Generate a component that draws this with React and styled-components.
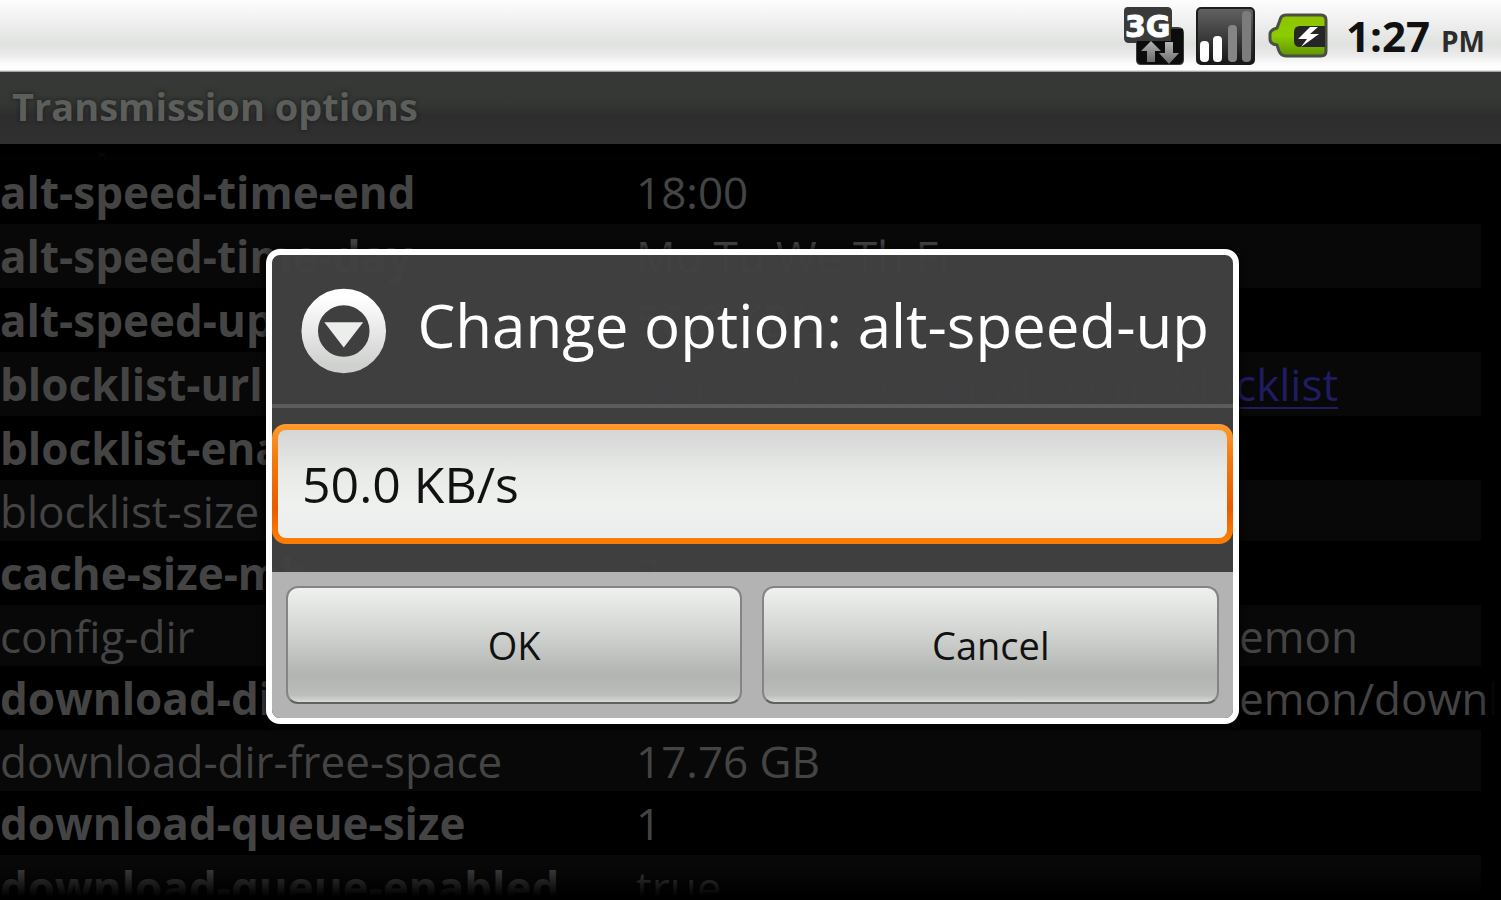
import React from "react";
import styled, { createGlobalStyle } from "styled-components";

const GlobalStyle = createGlobalStyle`
  * { box-sizing: border-box; }
  html, body, #root { height: 100%; }
  body {
    margin: 0;
    background: #000;
    font-family: "Open Sans", "Noto Sans", sans-serif;
    overflow: hidden;
  }
`;

const Screen = styled.div`
  display: flex;
  flex-direction: column;
  height: 100%;
  overflow: hidden;
`;

const StatusBar = styled.header`
  flex: none;
  display: flex;
  align-items: center;
  justify-content: flex-end;
  gap: 12px;
  height: 72px;
  padding: 0 16px 0 0;
  background: linear-gradient(#fdfdfd 0, #f1f2f1 18px, #e0e2e0 44px, #e8e9e8 54px, #fff 66px, #fff 70px, #8a8a8a 72px);
`;

const Clock = styled.time`
  margin-left: 2px;
  padding-top: 4px;
  color: #111;
  font-size: 42px;
  font-weight: 700;
  line-height: 68px;
  white-space: nowrap;
`;

const Meridiem = styled.span`
  color: #2c2c2c;
  font-size: 28px;
`;

const Stage = styled.main`
  position: relative;
  flex: 1;
  display: flex;
  flex-direction: column;
  min-height: 0;
`;

const TitleBar = styled.h1`
  flex: none;
  height: 72px;
  margin: 0;
  padding: 0 12px;
  background: linear-gradient(#383838, #333733 45%, #2d2d2d 60%, #303030);
  color: #5c5e5c;
  font-size: 38px;
  font-weight: 700;
  line-height: 68px;
  text-shadow: 0 0 4px #1c1c1c;
`;

const ListViewport = styled.section`
  position: relative;
  flex: 1;
  min-height: 0;
  overflow: hidden;
`;

const OptionTable = styled.table`
  table-layout: fixed;
  width: calc(100% - 20px);
  margin-top: -48px;
  border-collapse: collapse;
`;

const OptionRow = styled.tr`
  height: ${(p) => (p.$editable ? 64 : 61)}px;
  background: ${(p) => (p.$striped ? "#080808" : "#000")};
`;

const OptionName = styled.th`
  width: 636px;
  padding: 0;
  color: #444;
  font-size: 44px;
  font-weight: ${(p) => (p.$editable ? 700 : 400)};
  line-height: 60px;
  text-align: left;
  white-space: nowrap;
`;

const OptionValue = styled.td`
  padding: 0;
  color: #444;
  font-size: 44px;
  line-height: 60px;
  white-space: nowrap;
`;

const ValueLink = styled.a`
  color: #1f1c60;
  text-decoration: underline;
  text-decoration-thickness: 2px;
  text-underline-offset: 6px;
`;

const EdgeFade = styled.div`
  position: absolute;
  pointer-events: none;
  ${(p) => p.$edge === "top" && "inset: 0 0 auto 0; height: 16px; background: linear-gradient(#000 50%, rgba(0, 0, 0, 0.7));"}
  ${(p) => p.$edge === "right" && "inset: 0 0 0 auto; width: 20px; background: linear-gradient(90deg, transparent, #000 70%);"}
  ${(p) => p.$edge === "bottom" && "inset: auto 0 0 0; height: 36px; background: linear-gradient(transparent, #000 90%);"}
`;

const Overlay = styled.div`
  position: absolute;
  inset: 0;
  display: flex;
  align-items: center;
  justify-content: center;
  padding-left: 4px;
`;

const Dialog = styled.form`
  flex: none;
  width: 65%;
  border: 6px solid #fff;
  border-radius: 14px;
  background: rgba(65, 65, 65, 0.97);
  box-shadow: 0 0 8px #000;
`;

const DialogHeader = styled.div`
  display: flex;
  align-items: center;
  gap: 30px;
  height: 153px;
  padding: 0 24px 0 28px;
  border-bottom: 4px solid #5c5c5c;
`;

const DialogTitle = styled.label`
  padding-bottom: 8px;
  color: #fff;
  font-size: 60px;
  line-height: 80px;
  white-space: nowrap;
`;

const DialogBody = styled.div`
  padding: 16px 0 28px;
`;

const FieldFrame = styled.div`
  padding: 6px;
  border-radius: 14px;
  background: linear-gradient(#ff9a2e, #f07a10 30%, #e65c00 70%, #fb7d04 96%);
`;

const Field = styled.input`
  display: block;
  width: 100%;
  height: 108px;
  padding: 0 24px;
  border: 0;
  border-radius: 8px;
  outline: 0;
  background: linear-gradient(#d4d5d4, #e8eae8 38%, #eff1ef 70%, #eceeee);
  color: #111;
  font-family: inherit;
  font-size: 50px;
`;

const ButtonBar = styled.div`
  display: grid;
  grid-template-columns: 1fr 1fr;
  gap: 20px;
  padding: 14px;
  border-radius: 0 0 8px 8px;
  background: #b3b3b3;
`;

const DialogButton = styled.button`
  height: 118px;
  padding: 0;
  border: 2px solid #838583;
  border-bottom-color: #606260;
  border-radius: 12px;
  background: linear-gradient(#eff1ef, #d3d5d3 38%, #b2b4b2 76%, #bcbebc 94%, #d8dad8);
  color: #111;
  font-family: inherit;
  font-size: 38px;
  line-height: 60px;
`;

const options = [
  { name: "alt-speed-time-enabled", value: "false", editable: true },
  { name: "alt-speed-time-end", value: "18:00", editable: true },
  { name: "alt-speed-time-day", value: "Mo Tu We Th Fr", editable: true },
  { name: "alt-speed-up", value: "50.0 KB/s", editable: true },
  { name: "blocklist-url", value: "http://www.example.com/blocklist", editable: true, link: true },
  { name: "blocklist-enabled", value: "false", editable: true },
  { name: "blocklist-size", value: "0", editable: false },
  { name: "cache-size-mb", value: "2", editable: true },
  { name: "config-dir", value: "/home/.local/transmission-daemon", editable: false },
  { name: "download-dir", value: "/home/.local/transmission-daemon/downloads", editable: true },
  { name: "download-dir-free-space", value: "17.76 GB", editable: false },
  { name: "download-queue-size", value: "1", editable: true },
  { name: "download-queue-enabled", value: "true", editable: true },
];

function NetworkIcon() {
  return (
    <svg width="62" height="62" viewBox="2 1 62 62" role="img" aria-label="3G data">
      <defs>
        <linearGradient id="arrow" x1="0" y1="0" x2="0" y2="1">
          <stop offset="0" stopColor="#b5b5b5" />
          <stop offset="1" stopColor="#6b6b6b" />
        </linearGradient>
      </defs>
      <path d="M8 3H47Q52 3 52 8V23H58Q64 23 64 29V56Q64 61 59 61H21Q16 61 16 56V39H9Q4 39 4 34V7Q4 3 8 3Z" fill="#3a3a3a" />
      <path d="M17 37H51V25H63V55Q63 60 58 60H22Q17 60 17 55Z" fill="#0c0c0c" />
      <text x="5" y="33" fill="#fff" stroke="#fff" strokeWidth="1" fontFamily="DejaVu Sans, sans-serif" fontWeight="700" fontSize="30">3G</text>
      <path d="M31 37L41 47H35V58H27V47H21Z" fill="url(#arrow)" />
      <path d="M49 60L39 49H45V38H53V49H59Z" fill="url(#arrow)" />
    </svg>
  );
}

function SignalIcon() {
  return (
    <svg width="60" height="62" viewBox="2 1 60 62" role="img" aria-label="Signal strength">
      <defs>
        <linearGradient id="signal" x1="0" y1="0" x2="0" y2="1">
          <stop offset="0" stopColor="#636363" />
          <stop offset="1" stopColor="#161616" />
        </linearGradient>
      </defs>
      <rect x="3" y="4" width="57" height="56" rx="4" fill="url(#signal)" stroke="#1c1c1c" strokeWidth="2" />
      <rect x="6" y="37" width="9" height="21" rx="4" fill="#fff" />
      <rect x="19" y="32" width="9" height="26" rx="4" fill="#fff" />
      <rect x="34" y="21" width="9" height="37" rx="4" fill="#858585" />
      <rect x="48" y="7" width="9" height="51" rx="4" fill="#7c7c7c" />
    </svg>
  );
}

function BatteryIcon() {
  return (
    <svg width="64" height="62" viewBox="0 0 64 62" role="img" aria-label="Battery charging">
      <defs>
        <linearGradient id="battery" x1="0" y1="0" x2="0" y2="1">
          <stop offset="0" stopColor="#8fc400" />
          <stop offset="0.5" stopColor="#8ccc00" />
          <stop offset="1" stopColor="#5e9400" />
        </linearGradient>
      </defs>
      <path d="M18 10H53Q58 10 58 15V46Q58 51 53 51H18Q13 51 11 46L9 40Q2 39 2 34V29Q2 25 9 23L12 15Q13 10 18 10Z" fill="url(#battery)" stroke="#4a4f44" strokeWidth="3" />
      <path d="M57 21H32Q26 21 26 27V36Q26 42 32 42H57Z" fill="#262626" />
      <path d="M42 22L30 34H39L33 42L51 29H42L50 22Z" fill="#fff" />
    </svg>
  );
}

function DialogIcon() {
  return (
    <svg width="90" height="94" viewBox="0 0 90 94" aria-hidden="true">
      <defs>
        <linearGradient id="ring" x1="0" y1="0" x2="0" y2="1">
          <stop offset="0" stopColor="#fff" />
          <stop offset="1" stopColor="#cfd1cf" />
        </linearGradient>
      </defs>
      <circle cx="45" cy="49" r="35" fill="none" stroke="url(#ring)" strokeWidth="17" />
      <path d="M25 40H65L45 66Z" fill="#eceeec" />
    </svg>
  );
}

export default function App() {
  return (
    <Screen>
      <GlobalStyle />
      <StatusBar>
        <NetworkIcon />
        <SignalIcon />
        <BatteryIcon />
        <Clock dateTime="13:27">
          1:27 <Meridiem>PM</Meridiem>
        </Clock>
      </StatusBar>
      <Stage>
        <TitleBar>Transmission options</TitleBar>
        <ListViewport>
          <OptionTable>
            <tbody>
              {options.map((o, i) => (
                <OptionRow key={o.name} $editable={o.editable} $striped={i % 2 === 0}>
                  <OptionName scope="row" $editable={o.editable}>{o.name}</OptionName>
                  <OptionValue>
                    {o.link ? <ValueLink href={o.value}>{o.value}</ValueLink> : o.value}
                  </OptionValue>
                </OptionRow>
              ))}
            </tbody>
          </OptionTable>
          <EdgeFade $edge="top" />
          <EdgeFade $edge="right" />
          <EdgeFade $edge="bottom" />
        </ListViewport>
        <Overlay>
          <Dialog role="dialog" aria-labelledby="dialog-title" onSubmit={(e) => e.preventDefault()}>
            <DialogHeader>
              <DialogIcon />
              <DialogTitle id="dialog-title" htmlFor="option-value">
                Change option: alt-speed-up
              </DialogTitle>
            </DialogHeader>
            <DialogBody>
              <FieldFrame>
                <Field id="option-value" type="text" defaultValue="50.0 KB/s" />
              </FieldFrame>
            </DialogBody>
            <ButtonBar>
              <DialogButton type="submit">OK</DialogButton>
              <DialogButton type="button">Cancel</DialogButton>
            </ButtonBar>
          </Dialog>
        </Overlay>
      </Stage>
    </Screen>
  );
}
